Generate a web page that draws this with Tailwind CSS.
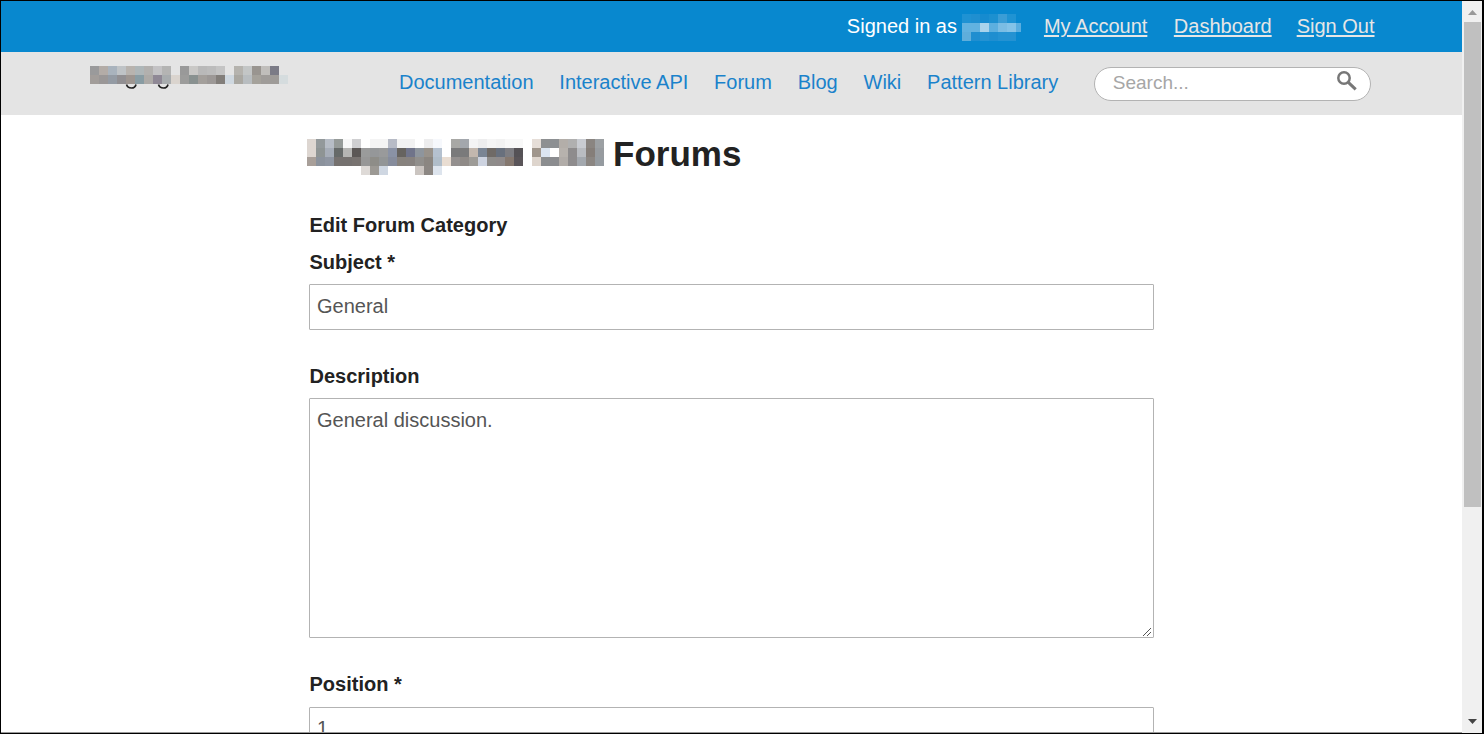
<!DOCTYPE html>
<html lang="en">
<head>
<meta charset="utf-8">
<title>Forums</title>
<script src="https://cdn.jsdelivr.net/npm/@tailwindcss/browser@4"></script>
</head>
<body class="h-[734px] w-[1484px] overflow-hidden bg-white font-['Liberation_Sans',Arial,sans-serif] text-xl leading-6">
<div class="flex h-[734px] w-[1484px] overflow-hidden border-t border-r-2 border-b border-l border-black">
  <div class="flex min-w-0 flex-1 flex-col overflow-hidden border-b border-[#999]">
    <header class="flex h-[51px] shrink-0 items-start justify-end gap-[25px] bg-[#0888cf] pt-[13px] pr-[87.5px] text-[#e6e6e6]">
      <div class="flex items-start gap-[5px] text-white"><span>Signed in as</span><svg class="block h-[27px] w-[59px]" data-cells="1f92d3 1f8fd0 168bcf 1c90d0 3a9dd6 1f93d3 -|62b2e0 62b2e0 a9d3ec 5cafdf 7bbde4 84c3e8 5aaee0|5faedb 1f8ed0 2492d2 1f8ed0 2492d2 2492d2 -"></svg></div>
      <a class="-ml-0.5 mr-[1.5px] underline decoration-2 underline-offset-2">My Account</a>
      <a class="underline decoration-2 underline-offset-2">Dashboard</a>
      <a class="underline decoration-2 underline-offset-2">Sign Out</a>
    </header>
    <nav class="flex h-[63px] shrink-0 items-start bg-[#e4e4e4] pl-[89px] text-[#1a82cb]">
      <svg class="mt-[14px] block h-[25px] w-[198px] shrink-0" data-cells="9a9a9b b3aca7 a9b3bd bfc3c6 b8b3ae aeb6b8 b2b0ae c3c2c4 b4b4b3 - 999999 c9c8c6 b9b9b9 bcbcbc c4c4c4 - b5b3ae c3c6c6 999590 c0bebb 7b7b86 -|a29d9a 9a9797 949ba4 918f92 9d9590 899ca3 adaaa7 8f8895 a8acae dad4ce 9c9c9b 899190 a39f9b 9c9896 827e7a cfd8e0 aaa8a2 b8bdc0 a5a29b 9f9c99 9e9b98 d5dcde"><path d="M36.500 18.500q1 3.500 5 3.500q3.700 0 4.500-3.500M68.500 18.500q1 3.500 5 3.500q3.700 0 4.500-3.500" fill="none" stroke="#222" stroke-width="1.700"/></svg>
      <div class="mt-[18px] ml-[111px] flex gap-[25.8px] whitespace-nowrap">
        <a>Documentation</a><a>Interactive API</a><a>Forum</a><a>Blog</a><a>Wiki</a><a>Pattern Library</a>
      </div>
      <div class="mt-[15px] ml-[35.5px] flex h-[34px] w-[277px] items-start justify-between rounded-full border border-[#b3b3b3] bg-white pr-[13px] pl-[18px] text-[#a6a6a6]">
        <span class="pt-[3px] text-[19px] leading-6">Search...</span>
        <svg class="mt-[3px] block size-5" viewBox="0 0 20 20" fill="none" stroke="#777"><circle cx="7" cy="7" r="5.700" stroke-width="2.500"/><path d="M11.300 11.300L18.700 18.300" stroke-width="3"/></svg>
      </div>
    </nav>
    <main class="ml-[308px] flex w-[845px] flex-col items-stretch font-bold text-[#222]">
      <h1 class="-ml-0.5 mt-[24px] flex h-9 text-[35px] leading-[30px] font-bold"><svg class="mr-[9px] block h-9 w-[297px] shrink-0" data-cells="ddd6d1 93999b b7bdc6 969b99 f7f7f7 cfcfd1 - f4f4f4 f4f4f4 b7bbc6 f2f2f2 f2f2f2 - ededee f6f8fc - a8a8a5 a3a7ad f4f4f5 ededee f5f5f5 f2f2f2 f8f8f8 f8f8f8 - e6ded8 8e9092 8d9093 b3aea9 b0b0b0 c9ccd2 8a8581 9ca0a3|ddd6d1 8e9494 a6adb8 666a69 b5b5b3 5b5755 9a9b9b 959799 999a9b 8a92a5 66635f 70748a 8e959d 98928b b5c1cf - 7a7a7b 7a7a7b c2b7ae 7a8594 6f6a66 68707d 7d7d82 555256 - a0968c dce5f1 - b7b2ad 8e8c8d b9bcc1 857e79 979b9f|a89f99 8b929c 8f96a2 75716f 75716f 787370 979797 8e8d88 929596 868c9c 87827d 87827f 918f8c 8b8681 b0bdc9 e9ddd2 94908f 8f8a87 9d9b97 cdd3e0 8e8c8a 8f8a8a 85786f 5a5559 - ded5cd 8b8d8f 8b8c8f b1aca8 8e8c8d a3a8ae 8b8682 959ba0|- - - - - - dedad7 9c9994 cfd7e2 - - - cbc5c1 8c8783 dde4ed"></svg>Forums</h1>
      <h2 class="mt-[38px] pl-[0.500px] font-bold">Edit Forum Category</h2>
      <label class="mt-[13px] pl-[0.500px]">Subject *</label>
      <div class="mt-[10px] h-[46px] rounded-[1px] border border-[#b3b3b3] px-[7px] py-[9px] font-normal text-[#555]">General</div>
      <label class="mt-[34px] pl-[0.500px]">Description</label>
      <div class="relative mt-[10px] h-[240px] rounded-[1px] border border-[#b3b3b3] px-[7px] py-[9px] font-normal text-[#555]">General discussion.<svg class="absolute right-0.5 bottom-px size-2" viewBox="0 0 8 8" stroke="#555" shape-rendering="crispEdges"><path d="M0 8L8 0M4 8L8 4"/></svg></div>
      <label class="mt-[34px] pl-[0.500px]">Position *</label>
      <div class="mt-[11px] h-[46px] rounded-[1px] border border-[#b3b3b3] px-[7px] py-2 font-normal text-[#555]">1</div>
    </main>
  </div>
  <aside class="flex w-5 shrink-0 flex-col items-center bg-[#f0f0f0] pr-px pl-0.5">
    <svg class="block h-[21px] w-[17px] shrink-0" viewBox="0 0 17 21"><path d="M4 14L8.500 9L13 14z" fill="#999"/></svg>
    <div class="h-[485px] w-[17px] shrink-0 bg-[#c0c0c0]"></div>
    <svg class="mt-auto block h-[21px] w-[17px] shrink-0" viewBox="0 0 17 21"><path d="M4 7L13 7L8.500 12z" fill="#444"/></svg>
  </aside>
</div>
<script>
// Pixelated names: rows of 9px cells, "-" leaves a cell empty.
document.querySelectorAll('svg[data-cells]').forEach(function (svg) {
  svg.dataset.cells.split('|').forEach(function (row, y) {
    row.split(' ').forEach(function (c, x) {
      if (c === '-') return;
      var r = document.createElementNS('http://www.w3.org/2000/svg', 'rect');
      r.setAttribute('x', x * 9); r.setAttribute('y', y * 9);
      r.setAttribute('width', 9); r.setAttribute('height', 9);
      r.setAttribute('fill', '#' + c);
      svg.appendChild(r);
    });
  });
});
</script>
</body>
</html>
